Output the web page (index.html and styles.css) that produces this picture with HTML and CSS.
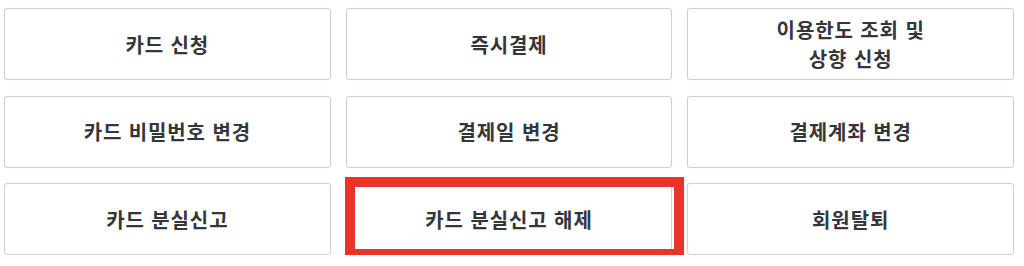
FILE: index.html
```html
<!DOCTYPE html>
<html lang="ko">
<head>
    <title>카드 서비스</title>
    <meta charset="utf-8">
    <meta name="viewport" content="width=device-width, initial-scale=1">
    <link rel="stylesheet" href="styles.css">
</head>
<body>
    <div class="menu-grid">
        <a class="menu-item" href="#">카드 신청</a>
        <a class="menu-item" href="#">즉시결제</a>
        <a class="menu-item" href="#">이용한도 조회 및<br>상향 신청</a>
        <a class="menu-item" href="#">카드 비밀번호 변경</a>
        <a class="menu-item" href="#">결제일 변경</a>
        <a class="menu-item" href="#">결제계좌 변경</a>
        <a class="menu-item" href="#">카드 분실신고</a>
        <a class="menu-item highlight" href="#">카드 분실신고 해제</a>
        <a class="menu-item" href="#">회원탈퇴</a>
    </div>
</body>
</html>
```

FILE: styles.css
```css
body {
    margin: 0;
    padding: 8px 10px 0 4px;
    background-color: #ffffff;
    font-family: "Noto Sans CJK KR", "Noto Sans", sans-serif;
}
.menu-grid {
    display: grid;
    grid-template-columns: repeat(3, 1fr);
    grid-auto-rows: 72px;
    column-gap: 15px;
    row-gap: 15.5px;
}
.menu-item {
    position: relative;
    display: flex;
    align-items: center;
    justify-content: center;
    text-align: center;
    border: 1px solid #cfd0d4;
    border-radius: 3px;
    box-shadow: 0 0 1px rgba(0,0,0,0.12);
    color: #35363a;
    font-size: 20px;
    font-weight: bold;
    letter-spacing: 0.9px;
    line-height: 29px;
    text-decoration: none;
}
.highlight::after {
    content: "";
    position: absolute;
    left: -2px;
    top: -7px;
    right: -13px;
    bottom: -5px;
    border: 10px solid #e8352a;
}
```
